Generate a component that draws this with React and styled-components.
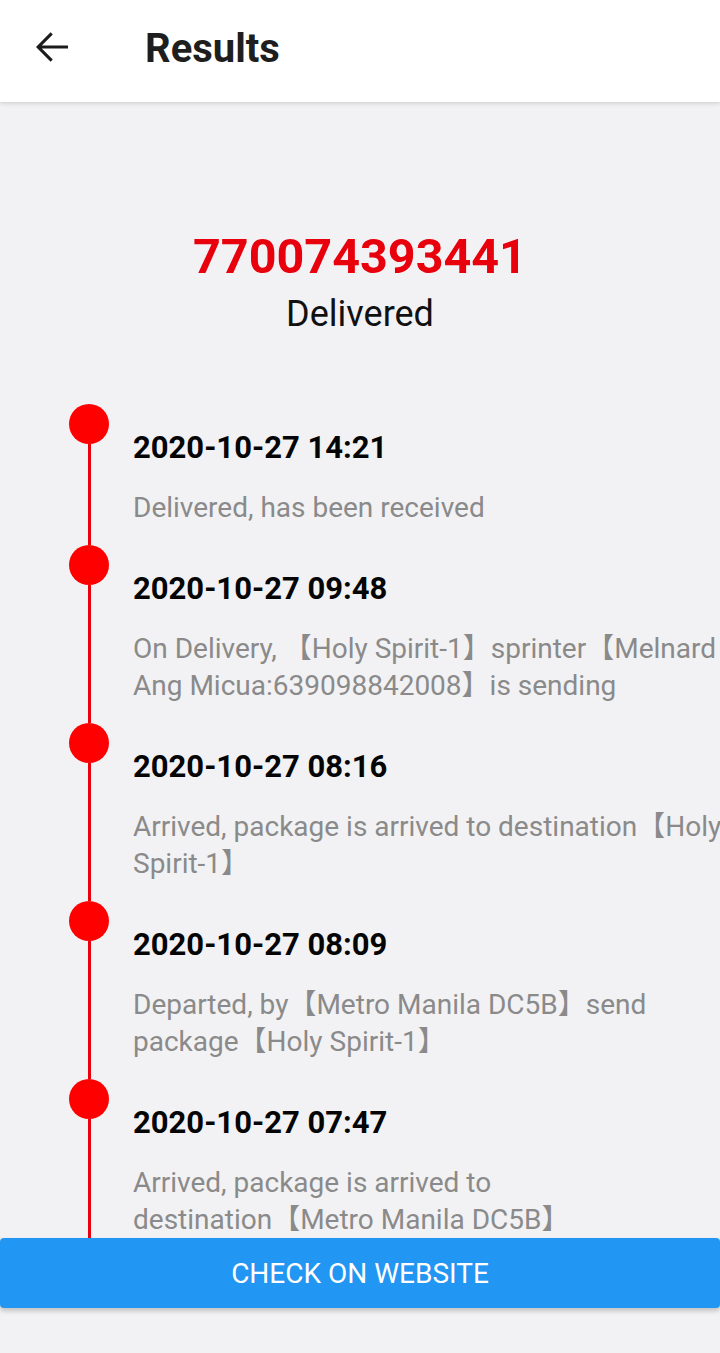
import React from 'react';
import styled, { createGlobalStyle } from 'styled-components';

const GlobalStyle = createGlobalStyle`
  html, body {
    margin: 0;
    padding: 0;
    background: #f2f2f4;
    font-family: Roboto, "Noto Sans", "Noto Sans CJK SC", sans-serif;
  }
`;

const Page = styled.div`
  position: relative;
  width: 720px;
  height: 1353px;
  overflow: hidden;
  background: #f2f2f4;
`;

const Header = styled.header`
  height: 102px;
  display: flex;
  align-items: center;
  background: #fff;
  box-shadow: 0 2px 4px rgba(0, 0, 0, 0.12);
  position: relative;
  z-index: 2;
`;

const BackButton = styled.button`
  width: 48px;
  height: 48px;
  margin-left: 28px;
  margin-top: -8px;
  padding: 0;
  border: none;
  background: none;
  display: flex;
  align-items: center;
  justify-content: center;
  color: #1c1c1c;
`;

const Title = styled.h1`
  margin: -6px 0 0 69px;
  font-size: 40px;
  font-weight: 700;
  color: #1e1e1e;
`;

const Summary = styled.section`
  padding-top: 127px;
  text-align: center;
`;

const TrackingNo = styled.div`
  font-size: 48.5px;
  font-weight: 700;
  line-height: 56px;
  color: #e8000c;
`;

const Status = styled.div`
  font-size: 36px;
  line-height: 40px;
  color: #111;
  margin-top: 9px;
`;

const Timeline = styled.ul`
  list-style: none;
  margin: 70px 0 0;
  padding: 0;
`;

const Item = styled.li`
  display: grid;
  grid-template-columns: 133px 1fr;
`;

const Rail = styled.div`
  display: flex;
  flex-direction: column;
  align-items: center;
  width: 40px;
  margin-left: 69px;
`;

const Dot = styled.span`
  width: 40px;
  height: 40px;
  border-radius: 50%;
  background: #ff0000;
  flex: none;
`;

const Line = styled.span`
  width: 3px;
  flex: 1;
  background: #e8000c;
`;

const Content = styled.div`
  padding: 24px 0 19.5px;
  min-width: 0;
`;

const Time = styled.div`
  font-size: 31px;
  font-weight: 700;
  line-height: 40px;
  color: #050505;
`;

const Desc = styled.div`
  margin-top: 20.5px;
  font-size: 28px;
  line-height: 37px;
  color: #8a8a8a;
  white-space: nowrap;
`;

const WebsiteButton = styled.button`
  position: absolute;
  left: 0;
  right: 0;
  bottom: 45px;
  height: 70px;
  border: none;
  border-radius: 4px;
  background: #2196f3;
  color: #fff;
  font-family: Roboto, sans-serif;
  font-size: 28px;
  text-transform: uppercase;
  box-shadow: 0 3px 5px rgba(0, 0, 0, 0.2);
`;

const events = [
  { time: '2020-10-27 14:21', lines: ['Delivered, has been received'] },
  {
    time: '2020-10-27 09:48',
    lines: ['On Delivery, 【Holy Spirit-1】sprinter【Melnard', 'Ang Micua:639098842008】is sending'],
  },
  {
    time: '2020-10-27 08:16',
    lines: ['Arrived, package is arrived to destination【Holy', 'Spirit-1】'],
  },
  {
    time: '2020-10-27 08:09',
    lines: ['Departed, by【Metro Manila DC5B】send', 'package【Holy Spirit-1】'],
  },
  {
    time: '2020-10-27 07:47',
    lines: ['Arrived, package is arrived to', 'destination【Metro Manila DC5B】'],
  },
];

function ArrowBack() {
  return (
    <svg width="48" height="48" viewBox="0 0 24 24" fill="currentColor">
      <path d="M20 11.2H6.9l5.5-5.5L11.3 4.6 4 12l7.3 7.4 1.1-1.1-5.5-5.5H20v-1.6z" />
    </svg>
  );
}

export default function App() {
  return (
    <Page>
      <GlobalStyle />
      <Header>
        <BackButton aria-label="back">
          <ArrowBack />
        </BackButton>
        <Title>Results</Title>
      </Header>
      <Summary>
        <TrackingNo>770074393441</TrackingNo>
        <Status>Delivered</Status>
      </Summary>
      <Timeline>
        {events.map((e) => (
          <Item key={e.time}>
            <Rail>
              <Dot />
              <Line />
            </Rail>
            <Content>
              <Time>{e.time}</Time>
              <Desc>
                {e.lines.map((l, i) => (
                  <div key={i}>{l}</div>
                ))}
              </Desc>
            </Content>
          </Item>
        ))}
      </Timeline>
      <WebsiteButton>Check on website</WebsiteButton>
    </Page>
  );
}
